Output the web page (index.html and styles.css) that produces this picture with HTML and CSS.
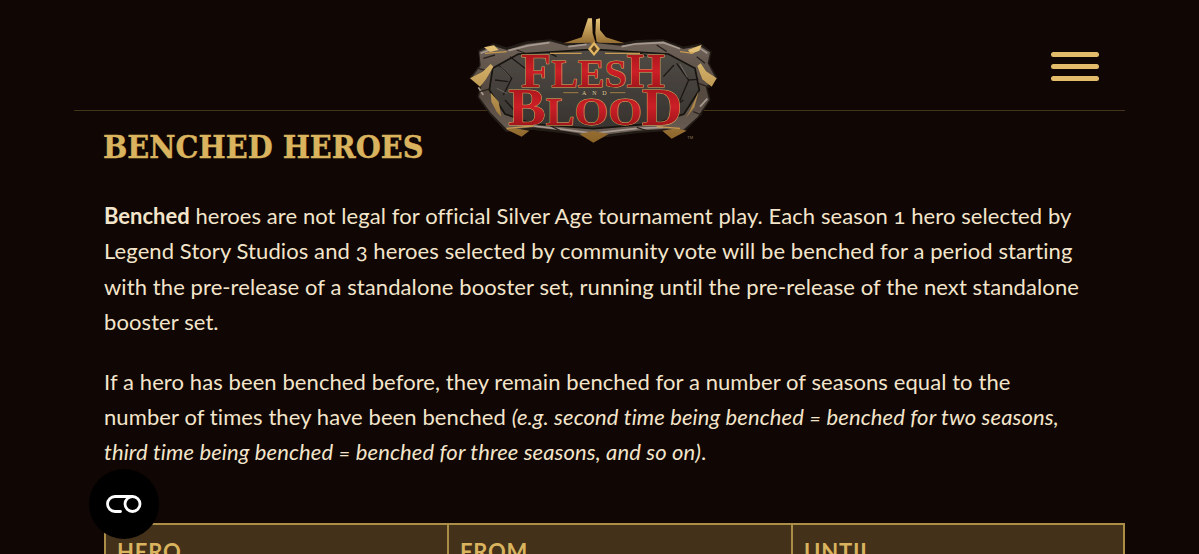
FILE: index.html
```html
<!DOCTYPE html>
<html lang="en">
<head>
<meta charset="utf-8">
<title>Benched Heroes</title>
<link rel="stylesheet" href="styles.css">
</head>
<body>
<div class="page">
  <header class="site-header">
    <svg class="logo" viewBox="0 0 870 480" role="img" aria-label="Flesh and Blood">
      <defs>
        <linearGradient id="stone" x1="0" y1="0" x2="0" y2="1">
          <stop offset="0" stop-color="#6f6259"/>
          <stop offset="0.55" stop-color="#54483f"/>
          <stop offset="1" stop-color="#6b5e55"/>
        </linearGradient>
        <linearGradient id="plate" x1="0" y1="0" x2="0" y2="1">
          <stop offset="0" stop-color="#504b45"/>
          <stop offset="1" stop-color="#37332f"/>
        </linearGradient>
        <linearGradient id="gold" x1="0" y1="0" x2="0" y2="1">
          <stop offset="0" stop-color="#e6c478"/>
          <stop offset="1" stop-color="#8a6228"/>
        </linearGradient>
        <linearGradient id="red" x1="0" y1="0" x2="0" y2="1">
          <stop offset="0" stop-color="#9c1217"/>
          <stop offset="0.5" stop-color="#cc1f27"/>
          <stop offset="1" stop-color="#8a0f14"/>
        </linearGradient>
        <filter id="soft"><feGaussianBlur stdDeviation="1.200"/></filter>
      </defs>
      <g filter="url(#soft)">
        <path fill="#241c18" d="M85 150 130 130 170 142 230 124 300 118 350 130 430 120 510 130 560 120 640 118 700 140 752 130 785 155 778 190 803 235 772 262 782 300 748 352 702 396 640 394 560 400 430 416 340 400 250 390 168 396 118 342 82 292 92 248 58 235 88 195Z"/>
        <path fill="url(#stone)" d="M88 155 130 138 170 150 230 132 300 124 350 137 430 128 510 137 560 128 640 124 700 147 750 138 780 157 773 190 797 235 767 260 777 300 743 350 700 389 640 387 560 392 430 408 340 392 250 382 172 389 122 338 87 290 97 245 64 235 92 197Z"/>
        <path fill="none" stroke="#a79a90" stroke-width="5" d="M92 160 135 145M175 152 235 137 298 128M355 140 410 133M515 140 555 132 640 128 690 146M750 145 772 160M760 215 780 232M85 262 100 285M750 320 772 296M250 378 340 388 430 400 560 385 640 382"/>
        <path fill="none" stroke="#2a221e" stroke-width="4" d="M100 175 135 165M85 205 120 215M90 275 125 265M740 170 765 190M745 250 780 262M730 335 755 345M300 376 330 392M560 382 590 392M200 150 240 165M620 135 650 155"/>
        <path fill="url(#plate)" stroke="#171210" stroke-width="5" d="M128 205 205 162 430 148 655 162 735 205 748 270 702 342 622 370 430 386 250 372 165 342 118 270Z"/>
        <path fill="none" stroke="#1d1815" stroke-width="4" d="M145 195 185 235 160 285M175 245 135 240M680 190 716 240 688 305M716 240 745 238M672 195 640 230M180 170 225 205M700 300 660 330M205 345 165 300M300 160 320 170M560 155 590 168"/>
        <path fill="none" stroke="#837a70" stroke-width="2" d="M150 200 180 232M690 192 712 232M140 265 170 280"/>
        <path fill="url(#gold)" d="M414 55 426 55 428 100 436 126 430 140 422 128 340 130 395 112ZM450 55 438 58 436 100 440 126 448 128 524 130 468 112 450 90Z"/>
        <path fill="#e3b865" d="M432 125 450 147 432 168 414 147Z"/>
        <path fill="#5a3f1e" d="M432 136 441 147 432 158 423 147Z"/>
        <path fill="url(#gold)" d="M102 142 132 136 146 150 120 156ZM714 150 755 134 748 152 722 162ZM60 235 98 215 122 192 130 200 108 238 90 260ZM800 235 768 214 752 190 742 198 757 238 785 260ZM122 278 146 305 154 350 140 335 124 305ZM746 274 733 322 707 355 722 328ZM168 388 215 410 238 392 195 385ZM637 392 665 416 710 392 680 385ZM388 402 430 428 476 402 430 393Z"/>
        <path fill="none" stroke="#c79a50" stroke-width="4" d="M105 160 170 155M690 155 730 160M300 160H395M465 160H570M170 385 250 378M620 380 690 385"/>
      </g>
      <text class="logo-word" x="213" y="262" textLength="432" lengthAdjust="spacingAndGlyphs" font-size="146">F<tspan font-size="118">LES</tspan>H</text>
      <text class="logo-word" x="175" y="374" textLength="522" lengthAdjust="spacingAndGlyphs" font-size="158">B<tspan font-size="122">LOO</tspan>D</text>
      <text class="logo-and" x="396" y="284" textLength="74" font-size="18">AND</text>
      <path fill="none" stroke="#b08a48" stroke-width="2.500" d="M340 278H385M480 278H526"/>
      <text class="logo-tm" x="712" y="416" font-size="12">TM</text>
    </svg>
    <button class="menu-button" aria-label="Menu"><span></span><span></span><span></span></button>
  </header>
  <main class="content">
    <h2 class="title">BENCHED HEROES</h2>
    <p><strong>Benched</strong> heroes are not legal for official Silver Age tournament play. Each season 1 hero selected by Legend Story Studios and 3 heroes selected by community vote will be benched for a period starting with the pre-release of a standalone booster set, running until the pre-release of the next standalone booster set.</p>
    <p>If a hero has been benched before, they remain benched for a number of seasons equal to the number of times they have been benched <em>(e.g. second time being benched = benched for two seasons, third time being benched = benched for three seasons, and so on)</em>.</p>
    <table class="heroes">
      <thead><tr><th>HERO</th><th>FROM</th><th>UNTIL</th></tr></thead>
    </table>
  </main>
</div>
<button class="float-button" aria-label="Accessibility">
  <svg viewBox="0 0 36 18" width="36" height="18" aria-hidden="true">
    <path fill="none" stroke="#fff" stroke-width="2.800" stroke-linecap="round" d="M26 1.500H9a7.500 7.500 0 0 0 0 15H14.500"/>
    <circle cx="26.500" cy="9" r="7.500" fill="none" stroke="#fff" stroke-width="2.800"/>
  </svg>
</button>
</body>
</html>
```
FILE: styles.css
```css
html, body {
  margin: 0;
  height: 100%;
  overflow: hidden;
  background: #100603;
}
.page {
  width: 1051px;
  margin-left: 74px;
  font-family: "Lato", "Liberation Sans", sans-serif;
  color: #f3e5cb;
}
.site-header {
  position: relative;
  box-sizing: content-box;
  height: 58px;
  padding: 52px 26px 0 0;
  border-bottom: 1px solid #43341a;
  display: flex;
  justify-content: flex-end;
  align-items: flex-start;
}
.logo {
  position: absolute;
  left: 376px;
  top: 0;
  width: 290px;
  height: 160px;
  z-index: 2;
}
.logo-word {
  font-family: "Liberation Serif", serif;
  font-weight: 700;
  fill: url(#red);
  stroke: #dba95c;
  stroke-width: 3px;
  paint-order: stroke;
}
.logo-and {
  font-family: "Liberation Serif", serif;
  fill: #dcc797;
}
.logo-tm {
  font-family: "Liberation Sans", sans-serif;
  fill: #8a7a60;
}
.menu-button {
  display: flex;
  flex-direction: column;
  gap: 7px;
  padding: 0;
  border: 0;
  background: none;
}
.menu-button span {
  display: block;
  width: 48px;
  height: 5px;
  border-radius: 3px;
  background: #e2bb6b;
}
.content {
  padding-left: 30px;
}
.title {
  margin: 16px 0 0 -1px;
  font-family: "DejaVu Serif", serif;
  font-stretch: condensed;
  font-size: 32px;
  line-height: 40px;
  font-weight: 700;
  color: #d9b35e;
  -webkit-text-stroke: 0.4px #d9b35e;
}
.content p {
  max-width: 976px;
  margin: 24px 0 0;
  font-size: 22px;
  font-weight: 400;
  line-height: 35.4px;
  letter-spacing: 0.09px;
  font-variant-numeric: oldstyle-nums;
}
.content p:first-of-type {
  margin-top: 31px;
}
.content strong {
  font-weight: 700;
  letter-spacing: 0;
}
.content em {
  letter-spacing: 0.12px;
}
.heroes {
  width: 100%;
  margin-top: 53px;
  border-collapse: collapse;
  table-layout: fixed;
}
.heroes th {
  background: #43311a;
  border: 2px solid #ac8d48;
  border-bottom: 0;
  padding: 13px 11px;
  text-align: left;
  font-size: 22px;
  font-weight: 700;
  letter-spacing: 0.8px;
  color: #d9b35e;
}
.heroes th:first-child,
.heroes th:nth-child(2) {
  width: 344px;
  box-sizing: border-box;
}
.heroes th:first-child {
  width: 343px;
}
.float-button {
  position: fixed;
  left: 89px;
  top: 469px;
  width: 70px;
  height: 70px;
  padding: 0;
  border: 0;
  border-radius: 50%;
  background: #000;
  display: flex;
  align-items: center;
  justify-content: center;
}
```
